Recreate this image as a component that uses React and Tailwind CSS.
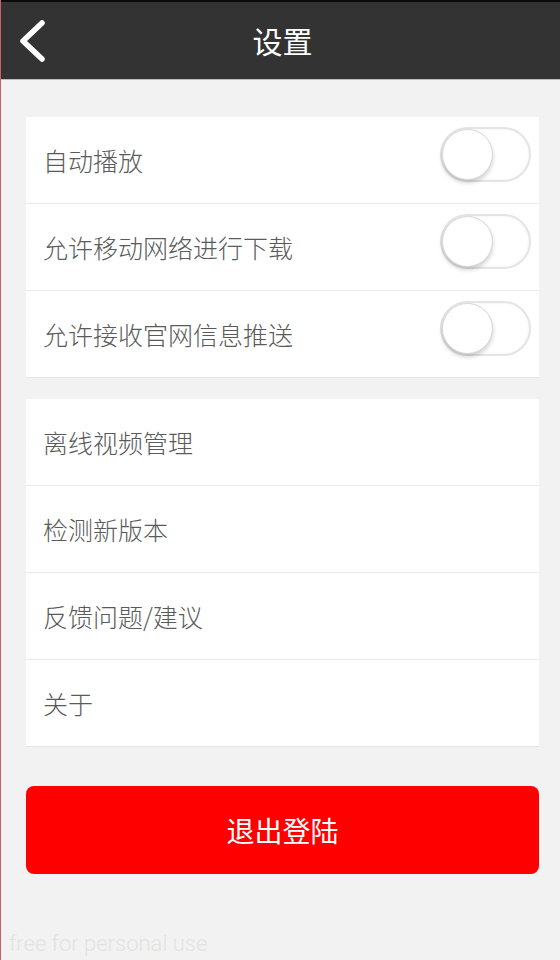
const font = { fontFamily: '"Noto Sans CJK SC", "Noto Sans", sans-serif' };

function Toggle() {
  return (
    <div className="relative mb-[11px] w-[91px] h-[55px] rounded-full bg-white border-2 border-[#e4e4e4] shadow-[inset_0_0_3px_rgba(0,0,0,0.06)]">
      <div className="absolute left-0 top-0 w-[51px] h-[51px] rounded-full bg-white border border-[#d6d6d6] shadow-[0_3px_4px_rgba(0,0,0,0.18)]" />
    </div>
  );
}

function Row({ label, toggle, last }) {
  return (
    <div className={`flex items-center justify-between h-[87px] pl-[17px] pr-[8px] ${last ? 'border-b border-[#e6e6e6]' : 'border-b border-[#ebebeb]'}`}>
      <span className="text-[25px] text-[#5a5a5a] font-light leading-none">{label}</span>
      {toggle && <Toggle />}
    </div>
  );
}

export default function App() {
  return (
    <div className="relative w-[560px] h-[960px] bg-[#f2f2f2] border-l border-[#c4646a] overflow-hidden" style={font}>
      <div className="h-[80px] bg-[#333333] border-t-2 border-[#0a0a0a] border-b border-b-[#bdbdbd] flex items-center relative">
        <svg className="absolute left-[17px] top-[17px]" width="32" height="46" viewBox="0 0 32 46">
          <polyline points="24,4 5,22 24,40" fill="none" stroke="white" strokeWidth="5.5" strokeLinecap="round" strokeLinejoin="round" />
        </svg>
        <div className="flex-1 text-center text-white text-[30px] pl-[4px]">设置</div>
      </div>

      <div className="pl-[25px] pr-[21px] pt-[37px]">
        <div className="bg-white">
          <Row label="自动播放" toggle />
          <Row label="允许移动网络进行下载" toggle />
          <Row label="允许接收官网信息推送" toggle last />
        </div>

        <div className="bg-white mt-[21px]">
          <Row label="离线视频管理" />
          <Row label="检测新版本" />
          <Row label="反馈问题/建议" />
          <Row label="关于" last />
        </div>

        <button className="mt-[39px] w-full h-[88px] rounded-[8px] bg-[#ff0000] text-white text-[28px] flex items-center justify-center">
          退出登陆
        </button>
      </div>

      <div className="absolute left-[8px] bottom-[0px] text-[22px] text-[#e2e2e2] font-light" style={{ fontFamily: 'Roboto, sans-serif' }}>
        free for personal use
      </div>
    </div>
  );
}
